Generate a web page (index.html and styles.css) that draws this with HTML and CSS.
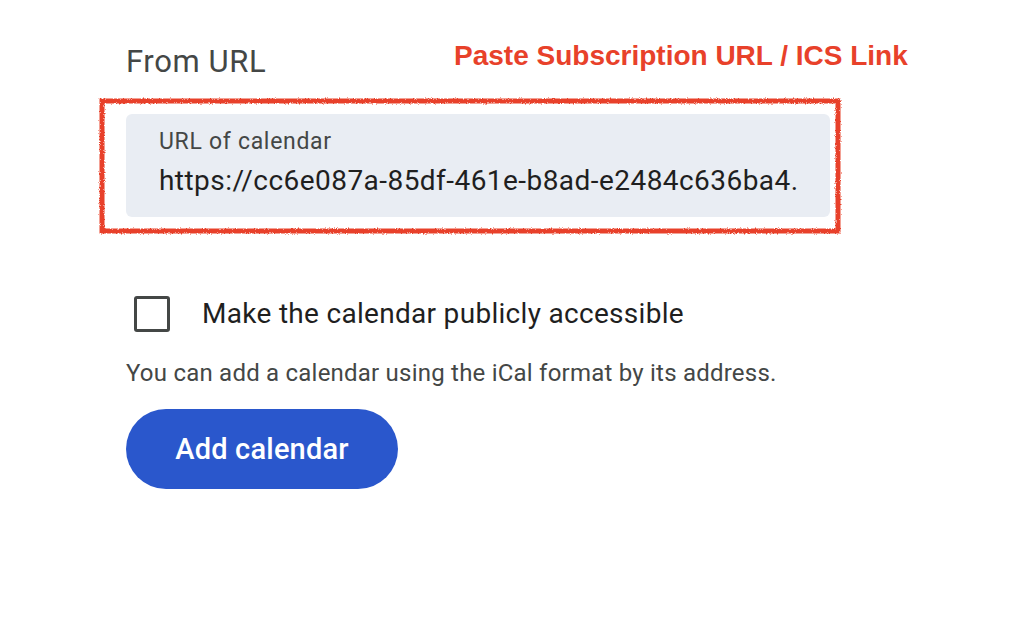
FILE: index.html
```html
<!DOCTYPE html>
<html>
<head>
<meta charset="utf-8">
<link rel="stylesheet" href="styles.css">
</head>
<body>
<div class="page">
  <div class="head-row">
    <h2 class="title">From URL</h2>
    <div class="note">Paste Subscription URL / ICS Link</div>
  </div>
  <div class="field-wrap">
    <div class="field">
      <div class="field-label">URL of calendar</div>
      <div class="field-value">https://cc6e087a-85df-461e-b8ad-e2484c636ba4.</div>
    </div>
    <svg class="scribble" viewBox="0 0 740 138" preserveAspectRatio="none" aria-hidden="true">
      <defs>
        <filter id="rough" x="-5%" y="-5%" width="110%" height="110%">
          <feTurbulence type="fractalNoise" baseFrequency="0.9" numOctaves="2" seed="3" result="n"/>
          <feDisplacementMap in="SourceGraphic" in2="n" scale="3" xChannelSelector="R" yChannelSelector="G"/>
        </filter>
      </defs>
      <rect x="4" y="4" width="734" height="130" fill="none" stroke="#e8412a" stroke-width="5" filter="url(#rough)"/>
    </svg>
  </div>
  <label class="check-row">
    <span class="box"></span>
    <span class="check-label">Make the calendar publicly accessible</span>
  </label>
  <p class="help">You can add a calendar using the iCal format by its address.</p>
  <button class="btn">Add calendar</button>
</div>
</body>
</html>
```

FILE: styles.css
```css
html, body {
  margin: 0;
  padding: 0;
  background: #ffffff;
}
.page {
  padding: 42px 0 0 126px;
  font-family: Roboto, "Noto Sans", sans-serif;
  color: #1f1f1f;
}
.head-row {
  display: flex;
  align-items: flex-start;
  height: 72px;
}
.title {
  margin: 0;
  font-weight: 400;
  font-size: 31px;
  line-height: 40px;
  letter-spacing: 0.6px;
  color: #444746;
  width: 328px;
}
.note {
  font-family: "Liberation Sans", Arial, sans-serif;
  font-weight: 700;
  font-size: 28px;
  line-height: 30px;
  color: #e8412a;
  margin-top: -1px;
}
.field-wrap {
  position: relative;
  width: 704px;
}
.field {
  background: #e9edf3;
  border-radius: 6px;
  height: 103px;
  box-sizing: border-box;
  padding: 14px 0 0 33px;
  overflow: hidden;
}
.field-label {
  font-size: 23px;
  line-height: 28px;
  letter-spacing: 0.7px;
  color: #444746;
}
.field-value {
  margin-top: 8px;
  font-size: 28px;
  line-height: 34px;
  letter-spacing: 0.45px;
  color: #1f1f1f;
  white-space: nowrap;
}
.scribble {
  position: absolute;
  left: -28px;
  top: -17px;
  width: 742px;
  height: 138px;
  overflow: visible;
}
.check-row {
  display: flex;
  align-items: center;
  gap: 32px;
  margin: 78px 0 0 8px;
}
.box {
  width: 30px;
  height: 30px;
  border: 3px solid #444746;
  border-radius: 3px;
  flex: none;
}
.check-label {
  font-size: 28px;
  line-height: 38px;
  letter-spacing: 0.3px;
  color: #1f1f1f;
}
.help {
  margin: 24px 0 0 0;
  font-size: 24px;
  line-height: 32px;
  letter-spacing: 0.22px;
  color: #444746;
}
.btn {
  margin-top: 20px;
  width: 272px;
  height: 80px;
  border: none;
  border-radius: 40px;
  background: #2a57cc;
  color: #ffffff;
  font-family: Roboto, "Noto Sans", sans-serif;
  font-size: 29px;
  font-weight: 500;
  letter-spacing: 0.2px;
  padding: 0;
}
```
